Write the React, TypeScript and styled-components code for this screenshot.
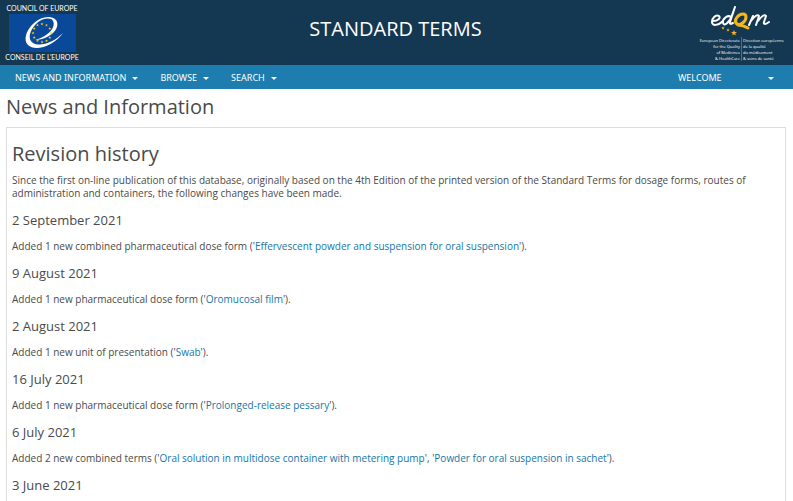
import React from "react";
import styled, { createGlobalStyle } from "styled-components";

const GlobalStyle = createGlobalStyle`
  *, *::before, *::after { box-sizing: border-box; }
  body {
    margin: 0;
    background: #fff;
    color: #4a4a4a;
    font-family: "Open Sans", sans-serif;
    font-size: 10px;
    line-height: 13px;
  }
`;

const Page = styled.div`
  height: 100vh;
  overflow: hidden;
`;

const Header = styled.header`
  display: grid;
  grid-template-columns: 1fr auto 1fr;
  height: 65px;
  padding: 0 7px 0 5px;
  background: #143851;
`;

const Logo = styled.a<{ $end?: boolean }>`
  justify-self: ${(p) => (p.$end ? "end" : "start")};
  height: 65px;
  svg { display: block; }
`;

const SiteTitle = styled.div`
  align-self: center;
  padding-bottom: 8px;
  color: #fff;
  font-size: 20px;
  line-height: 26px;
`;

const NavBar = styled.nav`
  display: flex;
  align-items: center;
  height: 24px;
  padding: 0 19px 0 15px;
  background: #1c7dae;
`;

const NavButton = styled.button<{ $end?: boolean }>`
  display: flex;
  align-items: center;
  justify-content: space-between;
  gap: 6px;
  width: ${(p) => (p.$end ? "96px" : "auto")};
  margin-left: ${(p) => (p.$end ? "auto" : "0")};
  margin-right: ${(p) => (p.$end ? "0" : "22px")};
  padding: 0;
  border: 0;
  background: none;
  color: #fff;
  font-family: "Noto Sans", sans-serif;
  font-size: 9px;
  line-height: 13px;
  text-transform: uppercase;
  cursor: pointer;
`;

const Caret = styled.span`
  border: 3px solid transparent;
  border-top-color: #fff;
  border-bottom: 0;
  margin-top: 2px;
`;

const Main = styled.main`
  padding: 4px 7px 0 6px;
`;

const PageTitle = styled.h1`
  margin: 0 0 7px;
  font-size: 20px;
  font-weight: 400;
  line-height: 27px;
`;

const Panel = styled.section`
  padding: 12px 5px 20px;
  border: 1px solid #ddd;
`;

const PanelTitle = styled.h2`
  margin: 0 0 7px;
  font-size: 20px;
  font-weight: 400;
  line-height: 27px;
`;

const Paragraph = styled.p`
  margin: 0;
`;

const DateHeading = styled.h3`
  margin: 11px 0;
  font-size: 13px;
  font-weight: 400;
  line-height: 18px;
`;

const TermLink = styled.a`
  color: #1676a6;
  text-decoration: none;
`;

type Entry = { date: string; lead?: string; terms: string[] };

const entries: Entry[] = [
  { date: "2 September 2021", lead: "Added 1 new combined pharmaceutical dose form", terms: ["Effervescent powder and suspension for oral suspension"] },
  { date: "9 August 2021", lead: "Added 1 new pharmaceutical dose form", terms: ["Oromucosal film"] },
  { date: "2 August 2021", lead: "Added 1 new unit of presentation", terms: ["Swab"] },
  { date: "16 July 2021", lead: "Added 1 new pharmaceutical dose form", terms: ["Prolonged-release pessary"] },
  { date: "6 July 2021", lead: "Added 2 new combined terms", terms: ["Oral solution in multidose container with metering pump", "Powder for oral suspension in sachet"] },
  { date: "3 June 2021", terms: [] },
];

const flagStars = Array.from({ length: 12 }, (_, i) => {
  const a = (i * Math.PI) / 6;
  return { x: 34 + 9 * Math.sin(a), y: 33 - 9 * Math.cos(a) };
});

const star = "M0-3 .8-1 3-1 1.2.4 1.9 2.6 0 1.3-1.9 2.6-1.2.4-3-1-.8-1Z";

function CouncilLogo() {
  return (
    <svg width="76" height="65" viewBox="-3 0 76 65" role="img" aria-label="Council of Europe">
      <g fill="#fff" fontFamily="Lato, sans-serif" fontSize="7" textAnchor="middle">
        <text x="34" y="11">COUNCIL OF EUROPE</text>
        <text x="34" y="60">CONSEIL DE L'EUROPE</text>
      </g>
      <rect x="1" y="14" width="67" height="38" fill="#0a489a" />
      <path
        d="M48 20C44 15 33 16 26 23C18 30 15 40 20 45C27 52 46 46 55 33C45 43 32 47 25 43C19 39 22 30 28 24C34 18 43 17 45 21C48 26 42 36 27 40C44 39 53 27 48 20Z"
        fill="#fff"
      />
      {flagStars.map((s, i) => (
        <path key={i} d={star} transform={`translate(${s.x} ${s.y}) scale(.5)`} fill="#fc0" />
      ))}
    </svg>
  );
}

function EdqmLogo() {
  return (
    <svg width="90" height="65" viewBox="-4 0 90 65" role="img" aria-label="EDQM">
      <g fill="none" stroke="#fff" strokeWidth="2" strokeLinecap="round" strokeLinejoin="round">
        <path d="M13 21C18 21 21 18 19 16C16 14 12 18 12 22C12 26 18 26 23 21" />
        <path d="M31 17C27 14 22 20 23 23C24 27 29 22 31 18L35 7L30 22Q29 25 33 23" />
        <path d="M49 25 53 16M51 21Q57 13 59 16L56 25M58 21Q64 13 66 16L64 22Q63 26 69 22" />
      </g>
      <g fill="none" stroke="#f6b61b" strokeWidth="3" strokeLinecap="round">
        <path d="M43 14C38 14 34 20 36 23C39 27 46 22 46 17C46 15 45 14 43 14ZM38 25Q43 25 48 28" />
      </g>
      <path d={star} transform="translate(23 28) scale(.6)" fill="#f6b61b" />
      <path d={star} transform="translate(28 30) scale(.6)" fill="#f6b61b" />
      <path d={star} transform="translate(34 33)" fill="#f6b61b" />
      <g fill="#fff" fontFamily="'Open Sans', sans-serif" fontSize="4">
        <g textAnchor="end">
          <text x="40" y="42">European Directorate</text>
          <text x="40" y="48">for the Quality</text>
          <text x="40" y="54">of Medicines</text>
          <text x="40" y="60">&amp; HealthCare</text>
        </g>
        <text x="43" y="42">Direction européenne</text>
        <text x="43" y="48">de la qualité</text>
        <text x="43" y="54">du médicament</text>
        <text x="43" y="60">&amp; soins de santé</text>
      </g>
      <path d="M41.500 37V61" stroke="#8fa3b1" strokeWidth=".5" />
    </svg>
  );
}

export default function App() {
  return (
    <Page>
      <GlobalStyle />
      <Header>
        <Logo href="#council"><CouncilLogo /></Logo>
        <SiteTitle>STANDARD TERMS</SiteTitle>
        <Logo href="#edqm" $end><EdqmLogo /></Logo>
      </Header>
      <NavBar>
        {["News and Information", "Browse", "Search"].map((label) => (
          <NavButton key={label} type="button">{label}<Caret /></NavButton>
        ))}
        <NavButton type="button" $end>Welcome<Caret /></NavButton>
      </NavBar>
      <Main>
        <PageTitle>News and Information</PageTitle>
        <Panel>
          <PanelTitle>Revision history</PanelTitle>
          <Paragraph>
            Since the first on-line publication of this database, originally based on the 4th Edition of the printed
            version of the Standard Terms for dosage forms, routes of administration and containers, the following
            changes have been made.
          </Paragraph>
          {entries.map((entry) => (
            <React.Fragment key={entry.date}>
              <DateHeading>{entry.date}</DateHeading>
              {entry.lead && (
                <Paragraph>
                  {entry.lead} (
                  {entry.terms.map((term, i) => (
                    <React.Fragment key={term}>
                      {i > 0 && ", "}'<TermLink href="#term">{term}</TermLink>'
                    </React.Fragment>
                  ))}
                  ).
                </Paragraph>
              )}
            </React.Fragment>
          ))}
        </Panel>
      </Main>
    </Page>
  );
}
